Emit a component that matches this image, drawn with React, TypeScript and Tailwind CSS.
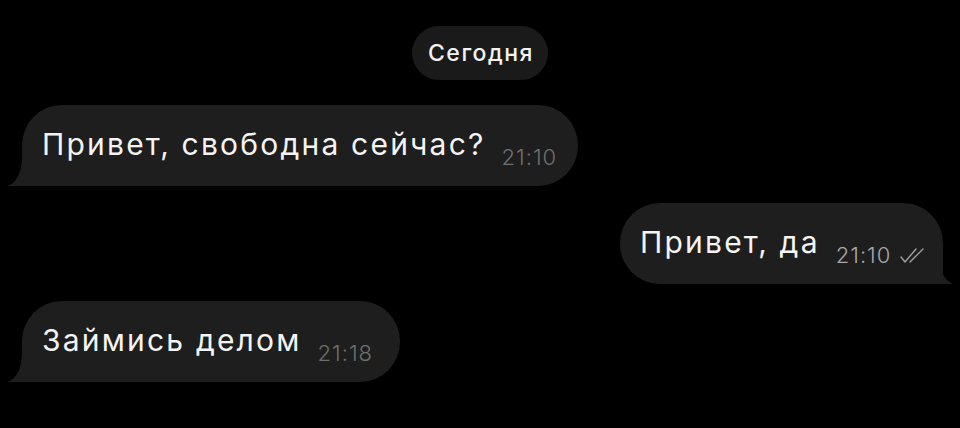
import React from "react";

type Msg = { text: string; time: string; out?: boolean; width: string };

const msgs: Msg[] = [
  { text: "Привет, свободна сейчас?", time: "21:10", width: "w-[556px]" },
  { text: "Привет, да", time: "21:10", out: true, width: "w-[323px]" },
  { text: "Займись делом", time: "21:18", width: "w-[378px]" },
];

function Tail({ out }: { out?: boolean }) {
  return (
    <svg
      viewBox="0 0 20 30"
      className={
        "absolute bottom-0 h-[30px] w-[20px] " +
        (out ? "right-[-10px] -scale-x-100" : "left-[-14px]")
      }
    >
      <path d="M14 0 C14 16 9 26 0 30 L20 30 L20 0 Z" fill="#1e1e1e" />
    </svg>
  );
}

function Checks() {
  return (
    <svg viewBox="0 0 28 17" className="ml-[8px] mb-[-7px] h-[17px] w-[28px]">
      <path
        d="M2 10 L6 15 L17 2 M11 15 L24 2"
        fill="none"
        stroke="#a0a0a0"
        strokeWidth="1.4"
        strokeLinecap="round"
        strokeLinejoin="round"
      />
    </svg>
  );
}

function Bubble({ m }: { m: Msg }) {
  return (
    <div className={"flex " + (m.out ? "justify-end pr-[17px]" : "pl-[22px]")}>
      <div
        className={
          "relative flex h-[81px] items-center bg-[#1e1e1e] pl-[20px] pb-[4px] rounded-[40px] " +
          m.width +
          (m.out ? " rounded-br-none" : " rounded-bl-none")
        }
      >
        <Tail out={m.out} />
        <div className="flex items-end">
          <span className="text-[30px] leading-none tracking-[2.2px] text-[#f4f4f4]">
            {m.text}
          </span>
          <span
            className={
              "ml-[16px] mb-[-9px] text-[22px] font-light leading-none tracking-[1px] " +
              (m.out ? "text-[#a8a8a8]" : "text-[#6f6f6f]")
            }
          >
            {m.time}
          </span>
          {m.out && <Checks />}
        </div>
      </div>
    </div>
  );
}

export default function App() {
  return (
    <div
      className="h-[428px] w-[960px] overflow-hidden bg-black pt-[26px]"
      style={{ fontFamily: "Inter, 'Noto Sans', sans-serif" }}
    >
      <div className="flex justify-center">
        <div className="flex h-[54px] w-[136px] items-center justify-center rounded-full bg-[#1a1a1a] pl-[2px] text-[23px] font-medium tracking-[1.5px] text-[#f2f2f2]">
          Сегодня
        </div>
      </div>
      <div className="mt-[25px] flex flex-col gap-[17px]">
        {msgs.map((m, i) => (
          <Bubble key={i} m={m} />
        ))}
      </div>
    </div>
  );
}
